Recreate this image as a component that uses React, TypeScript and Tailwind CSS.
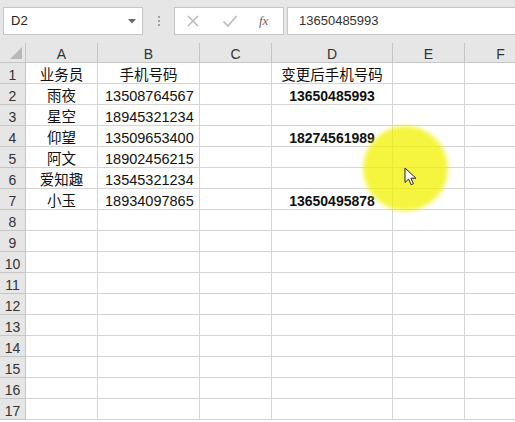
import React from "react";

const cols = [
  { key: "A", w: "w-[72px]" },
  { key: "B", w: "w-[102px]" },
  { key: "C", w: "w-[72px]" },
  { key: "D", w: "w-[121px]" },
  { key: "E", w: "w-[72px]" },
  { key: "F", w: "w-[72px]" },
];

const data: Record<number, { a?: string; b?: string; d?: string }> = {
  1: { a: "业务员", b: "手机号码", d: "变更后手机号码" },
  2: { a: "雨夜", b: "13508764567", d: "13650485993" },
  3: { a: "星空", b: "18945321234" },
  4: { a: "仰望", b: "13509653400", d: "18274561989" },
  5: { a: "阿文", b: "18902456215" },
  6: { a: "爱知趣", b: "13545321234" },
  7: { a: "小玉", b: "18934097865", d: "13650495878" },
};

const font = "font-['Liberation_Sans','Noto_Sans_CJK_SC',sans-serif]";

function Row({ n }: { n: number }) {
  const r = data[n] || {};
  return (
    <div className="flex h-[21px]">
      <div className="w-[26px] shrink-0 bg-[#e6e6e6] border-r border-b border-[#c6c6c6] text-[14px] text-[#333] flex items-end justify-center pb-[1px] leading-none">
        {n}
      </div>
      {cols.map((c) => {
        let content: React.ReactNode = null;
        let align = "justify-center";
        if (c.key === "A") content = r.a;
        if (c.key === "B") {
          content = r.b;
          if (n > 1) align = "justify-start pl-[7px]";
        }
        if (c.key === "D") {
          content = r.d;
        }
        const bold = c.key === "D" && n > 1;
        return (
          <div
            key={c.key}
            className={`${c.w} shrink-0 border-r border-b border-[#d4d4d4] flex items-end ${align} pb-[1px] leading-none whitespace-nowrap text-[#111] ${
              bold ? "font-bold text-[14px]" : "text-[14.5px]"
            }`}
          >
            {content}
          </div>
        );
      })}
    </div>
  );
}

export default function App() {
  const rows = Array.from({ length: 17 }, (_, i) => i + 1);
  return (
    <div className={`relative w-[515px] h-[422px] overflow-hidden bg-white ${font}`}>
      {/* formula bar */}
      <div className="h-[43px] bg-[#e6e6e6] flex items-start pt-[7px]">
        <div className="ml-[3px] w-[140px] h-[28px] bg-white border border-[#c6c6c6] flex items-center justify-between pl-[7px] pr-[6px] text-[13px] text-[#222]">
          <span>D2</span>
          <svg width="8" height="5" viewBox="0 0 8 5">
            <path d="M0 0h8L4 4.5z" fill="#666" />
          </svg>
        </div>
        <div className="w-[31px] h-[28px] flex flex-col items-center justify-center gap-[2px]">
          <span className="w-[2px] h-[2px] bg-[#a0a0a0]" />
          <span className="w-[2px] h-[2px] bg-[#a0a0a0]" />
          <span className="w-[2px] h-[2px] bg-[#a0a0a0]" />
        </div>
        <div className="w-[110px] h-[28px] bg-white border border-[#c6c6c6] flex items-center pl-[10px]">
          <svg width="14" height="14" viewBox="0 0 14 14" className="ml-[1px]">
            <path d="M2 2l10 10M12 2L2 12" stroke="#bdbdbd" strokeWidth="1.6" />
          </svg>
          <svg width="16" height="14" viewBox="0 0 16 14" className="ml-[22px]">
            <path d="M1.5 7.5l4.5 4.5 8.5-10" stroke="#bdbdbd" strokeWidth="1.7" fill="none" />
          </svg>
          <span className="ml-[21px] text-[13px] italic text-[#666] font-['Liberation_Serif',serif]">
            fx
          </span>
        </div>
        <div className="ml-[3px] flex-1 h-[28px] bg-white border border-[#c6c6c6] border-r-0 flex items-center pl-[11px] text-[13px] text-[#333]">
          13650485993
        </div>
      </div>

      {/* column header */}
      <div className="flex h-[20px] bg-[#e6e6e6]">
        <div className="relative w-[26px] shrink-0 border-r border-b border-[#c6c6c6]">
          <svg width="12" height="12" viewBox="0 0 12 12" className="absolute right-[3px] bottom-[3px]">
            <path d="M12 0v12H0z" fill="#b8b8b8" />
          </svg>
        </div>
        {cols.map((c) => (
          <div
            key={c.key}
            className={`${c.w} shrink-0 border-r border-b border-[#c6c6c6] flex items-end justify-center pb-[1px] text-[14px] text-[#333] leading-none`}
          >
            {c.key}
          </div>
        ))}
      </div>

      {rows.map((n) => (
        <Row key={n} n={n} />
      ))}

      {/* highlight circle */}
      <div className="absolute left-[363px] top-[126px] w-[85px] h-[85px] rounded-full bg-[#f2f200]/75 blur-[2px]" />
      <svg
        width="13"
        height="19"
        viewBox="0 0 13 19"
        className="absolute left-[404px] top-[167px]"
      >
        <path
          d="M1 1v14.5l3.6-3.4 2.6 5.6 2.2-1-2.5-5.5h5z"
          fill="#fff"
          stroke="#222"
          strokeWidth="1"
          strokeLinejoin="round"
        />
      </svg>
    </div>
  );
}
